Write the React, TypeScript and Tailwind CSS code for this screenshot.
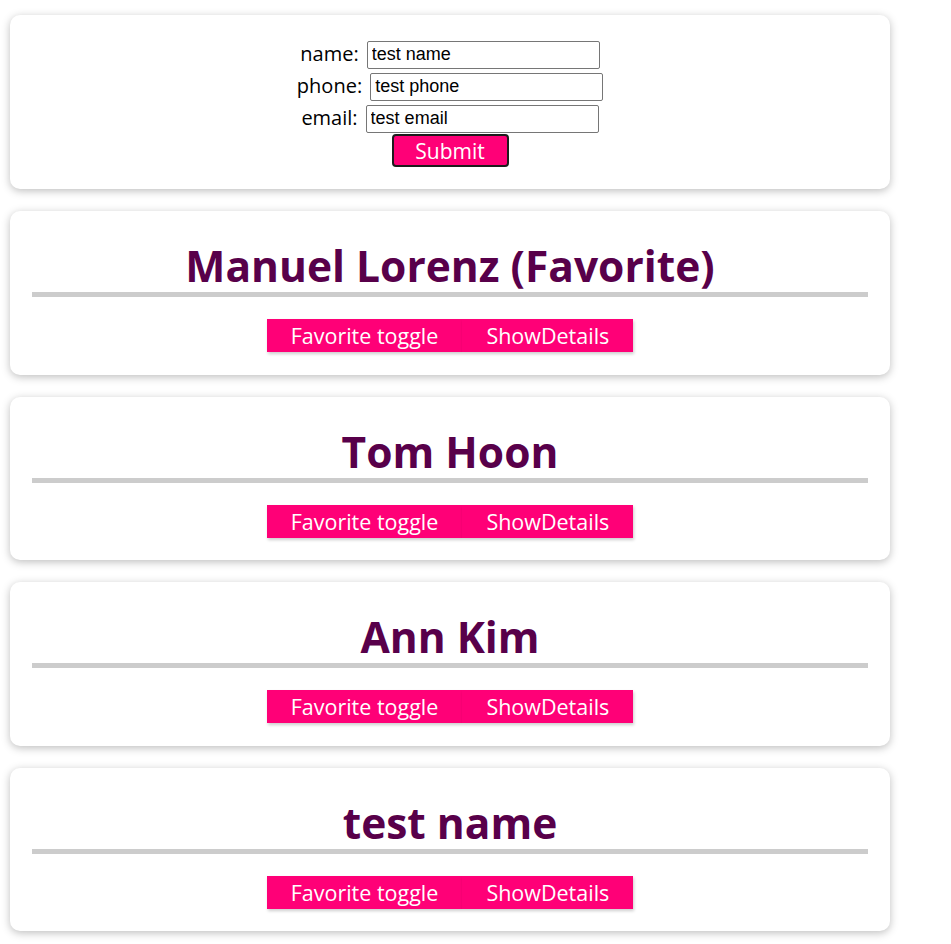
import { useState } from 'react';

type Contact = { name: string; favorite: boolean };

const initialContacts: Contact[] = [
  { name: 'Manuel Lorenz', favorite: true },
  { name: 'Tom Hoon', favorite: false },
  { name: 'Ann Kim', favorite: false },
  { name: 'test name', favorite: false },
];

const font = "font-['Open_Sans','Noto_Sans_CJK_KR',sans-serif]";

const ContactCard = ({ contact, onToggle }: { contact: Contact; onToggle: () => void }) => (
  <li className="h-[163.5px] rounded-[10px] bg-white px-[22px] pt-[29px] shadow-[0_2px_8px_rgba(0,0,0,0.26)]">
    <h2 className="border-b-[5px] border-[#ccc] text-center text-[42.5px] leading-[52px] font-bold text-[#58004a]">
      {contact.name}
      {contact.favorite ? ' (Favorite)' : ''}
    </h2>
    <div className="mt-[22px] flex justify-center">
      <button
        onClick={onToggle}
        className="h-[33px] bg-[#ff0077] px-6 text-[21.5px] leading-[33px] text-white shadow-[1px_2px_3px_rgba(0,0,0,0.2)]"
      >
        Favorite toggle
      </button>
      <button className="h-[33px] bg-[#ff0077] px-6 text-[21.5px] leading-[33px] text-white shadow-[1px_2px_3px_rgba(0,0,0,0.2)]">
        ShowDetails
      </button>
    </div>
  </li>
);

export default function App() {
  const [contacts, setContacts] = useState(initialContacts);

  const toggle = (i: number) =>
    setContacts((prev) => prev.map((c, idx) => (idx === i ? { ...c, favorite: !c.favorite } : c)));

  return (
    <div className={`min-h-screen bg-white pt-[15px] pl-[10px] ${font}`}>
      <div className="flex w-[880px] flex-col gap-[22px]">
        {/* add contact form */}
        <form
          onSubmit={(e) => e.preventDefault()}
          className="flex h-[174px] flex-col items-center rounded-[10px] bg-white pt-[23px] shadow-[0_2px_8px_rgba(0,0,0,0.26)]"
        >
          {[
            ['name', 'test name'],
            ['phone', 'test phone'],
            ['email', 'test email'],
          ].map(([label, value]) => (
            <div key={label} className="flex h-8 items-center gap-[8px]">
              <label className="text-[20px] text-black">{label}:</label>
              <input
                defaultValue={value}
                className="mt-[1px] h-[28px] w-[233px] rounded-[2px] border border-[#767676] px-[4px] font-['Liberation_Sans',Arial,sans-serif] text-[18px] text-black"
              />
            </div>
          ))}
          <button
            type="submit"
            className="h-[33px] w-[117px] rounded-[4px] border-2 border-[#1c1c1c] bg-[#ff0077] text-[21px] text-white"
          >
            Submit
          </button>
        </form>

        <ul className="flex flex-col gap-[22px]">
          {contacts.map((c, i) => (
            <ContactCard key={c.name} contact={c} onToggle={() => toggle(i)} />
          ))}
        </ul>
      </div>
    </div>
  );
}
